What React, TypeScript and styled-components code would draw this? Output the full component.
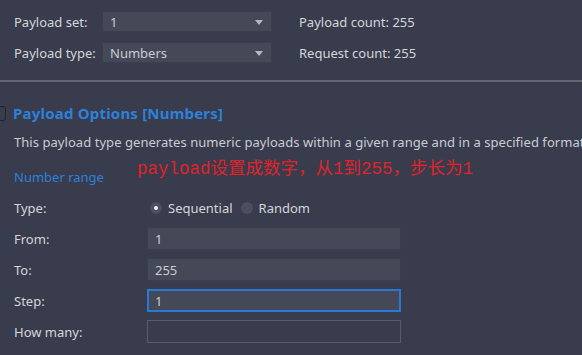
import styled, { createGlobalStyle } from "styled-components";

const GlobalStyle = createGlobalStyle`
  html, body {
    margin: 0;
    padding: 0;
    background: #383c4c;
  }
  body {
    font-family: "Noto Sans", "Open Sans", sans-serif;
    font-size: 13px;
    color: #d4d6da;
  }
`;

const Page = styled.div`
  position: relative;
  width: 582px;
  height: 355px;
  overflow: hidden;
  background: #383c4c;
`;

const TopGrid = styled.div`
  display: grid;
  grid-template-columns: 88px 170px auto;
  grid-auto-rows: 21px;
  row-gap: 10px;
  align-items: center;
  padding: 11px 0 0 14px;
`;

const Label = styled.span`
  color: #d4d6da;
  white-space: nowrap;
`;

const Count = styled.span`
  margin-left: 27px;
  color: #d4d6da;
  white-space: nowrap;
`;

const Select = styled.div`
  position: relative;
  height: 21px;
  background: #454957;
  border: 1px solid #3b3f4d;
  box-sizing: border-box;
  padding-left: 7px;
  display: flex;
  align-items: center;
  color: #c9ccd3;

  &::after {
    content: "";
    position: absolute;
    right: 8px;
    top: 8px;
    border-left: 4px solid transparent;
    border-right: 4px solid transparent;
    border-top: 5px solid #b4b8c2;
  }
`;

const Divider = styled.div`
  height: 2px;
  margin-top: 17px;
  background: #62666f;
`;

const Options = styled.section`
  padding: 20px 0 0 14px;
`;

const HeadingRow = styled.div`
  display: flex;
  align-items: center;
  height: 22px;
`;

const CollapseIcon = styled.span`
  width: 12px;
  height: 13px;
  margin-left: -22px;
  margin-right: 7px;
  border: 1.5px solid #202330;
  border-radius: 3px;
`;

const Heading = styled.h2`
  margin: 0;
  font-size: 15px;
  font-weight: 700;
  color: #2f80da;
  letter-spacing: 0.2px;
`;

const Description = styled.p`
  margin: 9px 0 0;
  line-height: 18px;
  white-space: nowrap;
  letter-spacing: 0.05px;
  color: #c9ccd2;
`;

const SubHeading = styled.h3`
  margin: 17px 0 0;
  line-height: 18px;
  font-size: 13px;
  font-weight: 400;
  color: #2f80da;
`;

const Annotation = styled.div`
  position: absolute;
  left: 137px;
  top: 158px;
  font-family: "Liberation Mono", "Noto Sans CJK SC", monospace;
  font-size: 17.5px;
  line-height: 22px;
  color: #e0222b;
  white-space: nowrap;
`;

const Form = styled.div`
  display: grid;
  grid-template-columns: 133px 254px;
  grid-auto-rows: 23px;
  row-gap: 8px;
  align-items: center;
  margin-top: 10px;
`;

const RadioGroup = styled.div`
  display: flex;
  align-items: center;
  margin-left: 3px;
`;

const Radio = styled.span<{ $checked?: boolean }>`
  position: relative;
  width: 12px;
  height: 12px;
  border-radius: 50%;
  background: #4b4f5e;
  margin-right: 6px;

  &::after {
    content: "";
    display: ${(p) => (p.$checked ? "block" : "none")};
    position: absolute;
    left: 4px;
    top: 4px;
    width: 4px;
    height: 4px;
    border-radius: 50%;
    background: #f2f2f2;
  }
`;

const RadioLabel = styled.span`
  margin-right: 8px;
  color: #d4d6da;
`;

const Input = styled.div<{ $focused?: boolean; $empty?: boolean }>`
  height: 23px;
  box-sizing: border-box;
  display: flex;
  align-items: center;
  color: #c9ccd3;
  background: ${(p) => (p.$empty ? "#383c4c" : "#454957")};
  border: ${(p) =>
    p.$focused
      ? "2px solid #2a78d6"
      : p.$empty
      ? "1px solid #5a5d68"
      : "1px solid #3b3f4d"};
  padding-left: ${(p) => (p.$focused ? "6px" : "7px")};
`;

export default function App() {
  return (
    <Page>
      <GlobalStyle />
      <TopGrid>
        <Label>Payload set:</Label>
        <Select>1</Select>
        <Count>Payload count: 255</Count>
        <Label>Payload type:</Label>
        <Select>Numbers</Select>
        <Count>Request count: 255</Count>
      </TopGrid>
      <Divider />
      <Options>
        <HeadingRow>
          <CollapseIcon />
          <Heading>Payload Options [Numbers]</Heading>
        </HeadingRow>
        <Description>
          This payload type generates numeric payloads within a given range and
          in a specified format.
        </Description>
        <SubHeading>Number range</SubHeading>
        <Form>
          <Label>Type:</Label>
          <RadioGroup>
            <Radio $checked />
            <RadioLabel>Sequential</RadioLabel>
            <Radio />
            <RadioLabel>Random</RadioLabel>
          </RadioGroup>
          <Label>From:</Label>
          <Input>1</Input>
          <Label>To:</Label>
          <Input>255</Input>
          <Label>Step:</Label>
          <Input $focused>1</Input>
          <Label>How many:</Label>
          <Input $empty />
        </Form>
      </Options>
      <Annotation>payload设置成数字，从1到255，步长为1</Annotation>
    </Page>
  );
}
